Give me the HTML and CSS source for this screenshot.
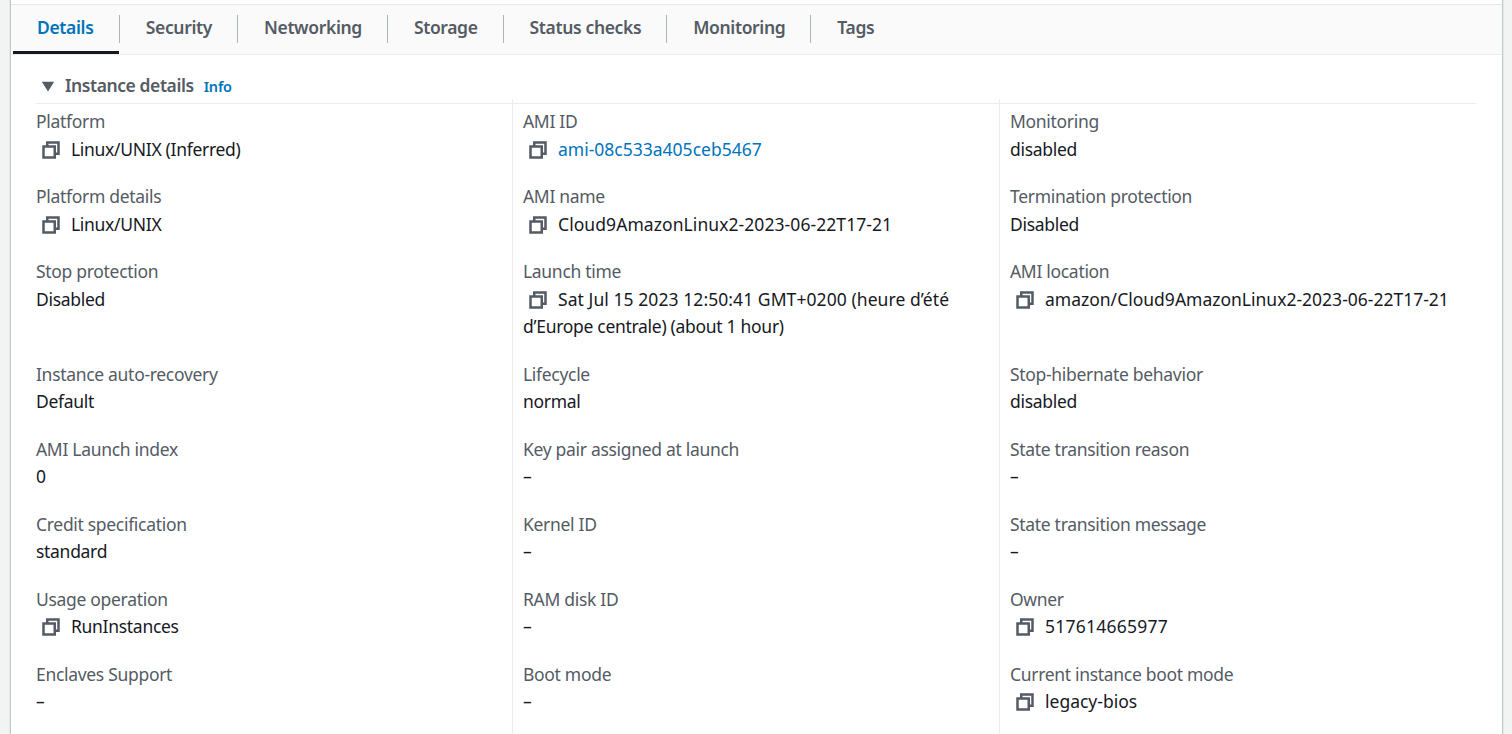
FILE: index.html
```html
<!DOCTYPE html>
<html lang="en">
<head>
<meta charset="utf-8">
<title>Instance details</title>
<link rel="stylesheet" href="styles.css">
</head>
<body>
<svg width="0" height="0" class="defs"><symbol id="copy" viewBox="0 0 16 16"><path d="M2 5.2h9v8.8H2z M5 5V2h9v9h-3" fill="none" stroke="#545b64" stroke-width="2"/></symbol></svg>
<main class="panel">
  <nav class="tabs">
    <a class="tab active"><span>Details</span></a>
    <a class="tab"><span>Security</span></a>
    <a class="tab"><span>Networking</span></a>
    <a class="tab"><span>Storage</span></a>
    <a class="tab"><span>Status checks</span></a>
    <a class="tab"><span>Monitoring</span></a>
    <a class="tab"><span>Tags</span></a>
  </nav>
  <section class="content">
    <header class="heading">
      <svg class="caret" width="14" height="11" viewBox="0 0 14 11"><path d="M.8.8h12.4L7 10.4z" fill="#545b64"/></svg>
      <h2>Instance details</h2><a class="info">Info</a>
    </header>
    <div class="grid">
      <dl class="col">
        <div class="item"><dt>Platform</dt><dd><svg class="copy"><use href="#copy"/></svg>Linux/UNIX (Inferred)</dd></div>
        <div class="item"><dt>Platform details</dt><dd><svg class="copy"><use href="#copy"/></svg>Linux/UNIX</dd></div>
        <div class="item tall"><dt>Stop protection</dt><dd>Disabled</dd></div>
        <div class="item"><dt>Instance auto-recovery</dt><dd>Default</dd></div>
        <div class="item"><dt>AMI Launch index</dt><dd>0</dd></div>
        <div class="item"><dt>Credit specification</dt><dd>standard</dd></div>
        <div class="item"><dt>Usage operation</dt><dd><svg class="copy"><use href="#copy"/></svg>RunInstances</dd></div>
        <div class="item"><dt>Enclaves Support</dt><dd>–</dd></div>
      </dl>
      <dl class="col">
        <div class="item"><dt>AMI ID</dt><dd><svg class="copy"><use href="#copy"/></svg><a class="link">ami-08c533a405ceb5467</a></dd></div>
        <div class="item"><dt>AMI name</dt><dd><svg class="copy"><use href="#copy"/></svg><span class="value">Cloud9AmazonLinux2-2023-06-22T17-21</span></dd></div>
        <div class="item tall"><dt>Launch time</dt><dd><svg class="copy"><use href="#copy"/></svg><span class="value">Sat Jul 15 2023 12:50:41 GMT+0200 (heure d’été</span><br>d’Europe centrale) (about 1 hour)</dd></div>
        <div class="item"><dt>Lifecycle</dt><dd>normal</dd></div>
        <div class="item"><dt>Key pair assigned at launch</dt><dd>–</dd></div>
        <div class="item"><dt>Kernel ID</dt><dd>–</dd></div>
        <div class="item"><dt>RAM disk ID</dt><dd>–</dd></div>
        <div class="item"><dt>Boot mode</dt><dd>–</dd></div>
      </dl>
      <dl class="col">
        <div class="item"><dt>Monitoring</dt><dd>disabled</dd></div>
        <div class="item"><dt>Termination protection</dt><dd>Disabled</dd></div>
        <div class="item tall"><dt>AMI location</dt><dd><svg class="copy"><use href="#copy"/></svg><span class="path">amazon/Cloud9AmazonLinux2-2023-06-22T17-21</span></dd></div>
        <div class="item"><dt>Stop-hibernate behavior</dt><dd>disabled</dd></div>
        <div class="item"><dt>State transition reason</dt><dd>–</dd></div>
        <div class="item"><dt>State transition message</dt><dd>–</dd></div>
        <div class="item"><dt>Owner</dt><dd><svg class="copy"><use href="#copy"/></svg><span class="number">517614665977</span></dd></div>
        <div class="item"><dt>Current instance boot mode</dt><dd><svg class="copy"><use href="#copy"/></svg><span class="path">legacy-bios</span></dd></div>
      </dl>
    </div>
  </section>
</main>
</body>
</html>
```
FILE: styles.css
```css
* { box-sizing: border-box; }
body {
  margin: 0;
  height: 734px;
  overflow: hidden;
  background: #f2f3f3;
  font-family: "Noto Sans", sans-serif;
  font-size: 17.5px;
  color: #16191f;
}
.defs { display: block; }
.panel {
  width: 1493px;
  height: 734px;
  margin-left: 10px;
  padding-top: 4px;
  overflow: hidden;
  background: #fff;
  border: solid #c3c9ca;
  border-width: 0 1px;
  box-shadow: 0 0 0 1px #e6e9e9;
}
.tabs {
  display: flex;
  height: 51px;
  padding-left: 2px;
  background: #fafafa;
  border-top: 1px solid #e3e9e9;
  border-bottom: 1px solid #eaeded;
}
.tab {
  display: flex;
  height: 49px;
  padding-top: 10px;
  border-bottom: 3px solid transparent;
  color: #545b64;
  font-size: 17.5px;
  font-weight: 600;
  letter-spacing: -0.36px;
}
.tab span {
  height: 28px;
  padding: 0 25px 0 26px;
  line-height: 24px;
  border-left: 1px solid #aab7b8;
  white-space: nowrap;
}
.tab.active {
  color: #0073bb;
  border-bottom-color: #16191f;
}
.tab.active span {
  padding-left: 24px;
  padding-right: 25.4px;
  border-left: 0;
}
.content { padding: 0 26px 0 25px; }
.heading {
  display: flex;
  align-items: center;
  height: 49px;
  padding-top: 14px;
  border-bottom: 1px solid #eaeded;
}
.caret { margin-left: 5px; }
.heading h2 {
  margin: 0 0 2px 10px;
  font-size: 17.5px;
  font-weight: 600;
  letter-spacing: -0.42px;
  color: #545b64;
}
.info {
  margin-left: 10px;
  font-size: 14.5px;
  font-weight: 600;
  letter-spacing: -0.2px;
  color: #0073bb;
}
.grid {
  display: grid;
  grid-template-columns: 476px 487px 1fr;
  margin-top: -5px;
}
.col {
  margin: 0;
  padding: 9px 0 0 10px;
  height: 640px;
  border-left: 1px solid #eaeded;
}
.col:first-child { padding-left: 0; border-left: 0; }
.item { height: 75px; line-height: 27.5px; white-space: nowrap; }
.item.tall { height: 102.5px; }
.item dt { color: #545b64; letter-spacing: -0.31px; }
.item dd { margin: 0; letter-spacing: -0.3px; }
.copy {
  width: 20px;
  height: 20px;
  margin: 0 10px 0 5px;
  vertical-align: -4.4px;
}
.link { color: #0073bb; letter-spacing: 0; }
.value { letter-spacing: 0.07px; }
.path { letter-spacing: 0; }
.number { letter-spacing: 0.25px; }
```
